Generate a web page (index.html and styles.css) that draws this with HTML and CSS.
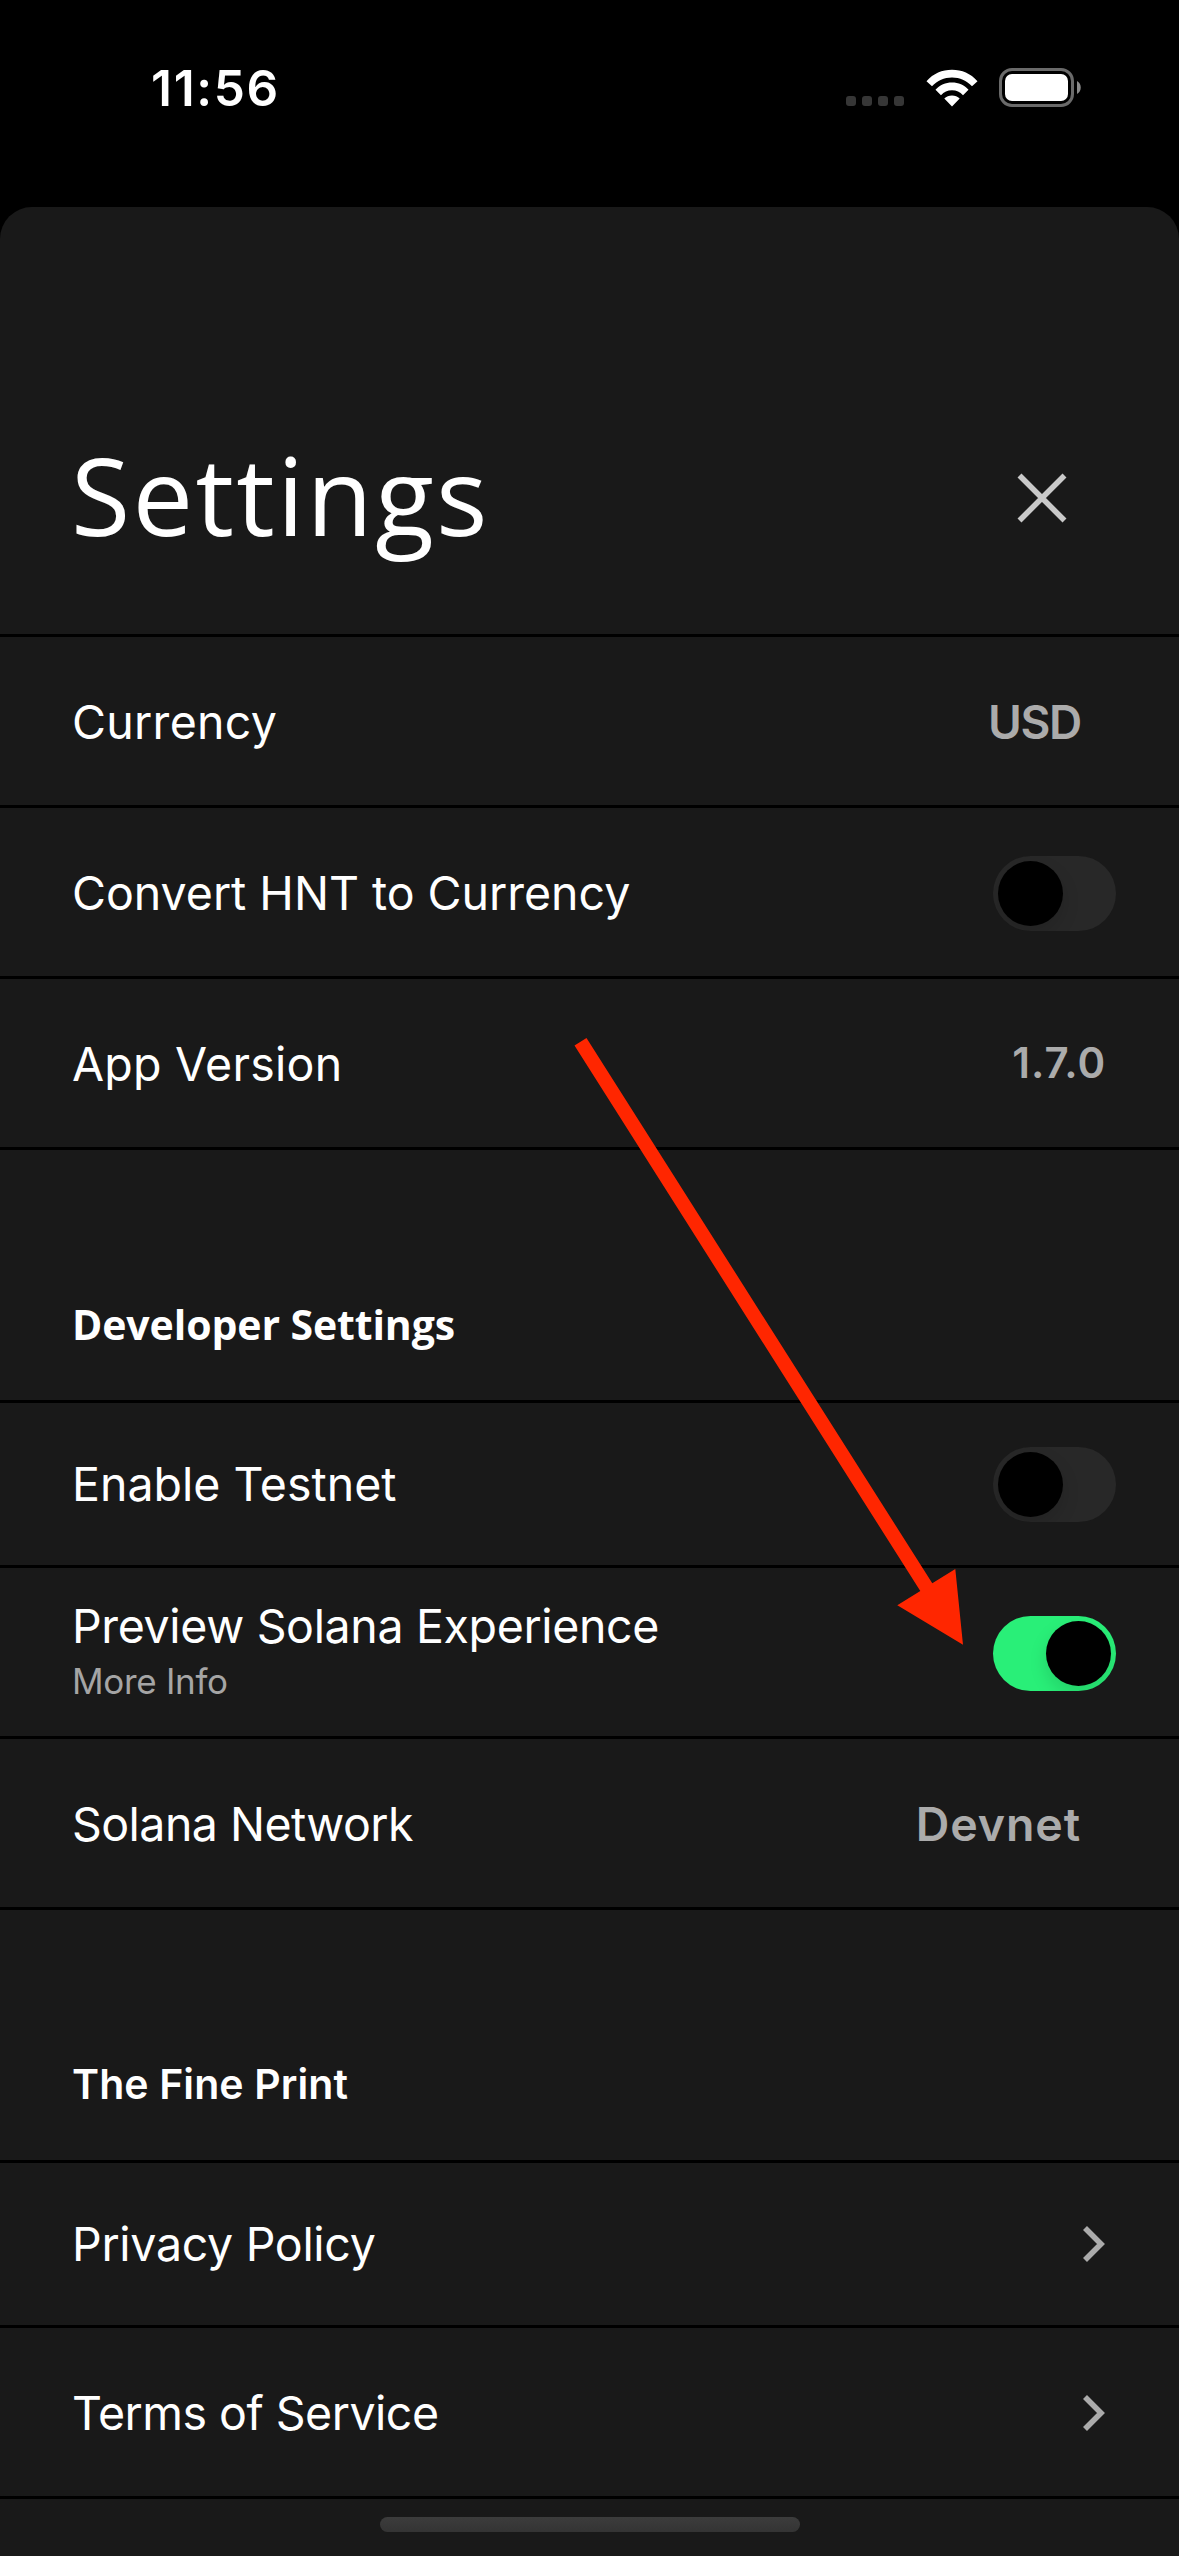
FILE: index.html
```
<!DOCTYPE html>
<html lang="en">
<head>
<meta charset="utf-8">
<title>Settings</title>
<link rel="stylesheet" href="styles.css">
</head>
<body>
<div class="screen">
  <header class="status">
    <span class="time">11:56</span>
    <div class="status-icons">
      <span class="dots"><i></i><i></i><i></i><i></i></span>
      <svg class="wifi" width="52" height="38" viewBox="0 0 52 38">
        <path fill="#fff" d="M.5 12.2C7.500 4.500 16 .8 26 .8s18.500 3.700 25.500 11.400L46 17.300C40.500 11.500 34 8.500 26 8.500S11.500 11.500 6 17.300zM9.500 20.800C14 16 19.500 13.600 26 13.600s12 2.400 16.500 7.200L37 26.200C34 23 30.500 21.300 26 21.300S18 23 15 26.200zM18.300 29.500C20.400 27.500 23 26.500 26 26.500s5.600 1 7.700 3L26 37.500z"/>
      </svg>
      <svg class="battery" width="83" height="39" viewBox="0 0 83 39">
        <rect x="1.500" y="1.500" width="72" height="36" rx="11.500" fill="none" stroke="#6a6a6a" stroke-width="3"/>
        <rect x="6" y="6" width="63" height="27" rx="7" fill="#fff"/>
        <path d="M78 13c5 2.500 5 10.500 0 13z" fill="#8a8a8a"/>
      </svg>
    </div>
  </header>

  <main class="sheet">
    <div class="sheet-head">
      <h1>Settings</h1>
      <svg class="close" width="50" height="50" viewBox="0 0 50 50"><path d="M2.500 2.500 47.500 47.500M47.500 2.500 2.500 47.500" stroke="#c9c9c9" stroke-width="5.600"/></svg>
    </div>

    <section class="group">
      <div class="row"><span class="label currency">Currency</span><span class="value select usd">USD</span></div>
      <div class="row"><span class="label convert">Convert HNT to Currency</span><span class="toggle"></span></div>
      <div class="row"><span class="label app">App Version</span><span class="value version">1.7.0</span></div>
    </section>

    <h2 class="dev">Developer Settings</h2>
    <section class="group">
      <div class="row short"><span class="label">Enable Testnet</span><span class="toggle"></span></div>
      <div class="row double">
        <div class="stack"><span class="label preview">Preview Solana Experience</span><span class="hint">More Info</span></div>
        <span class="toggle on"></span>
      </div>
      <div class="row"><span class="label solana">Solana Network</span><span class="value select devnet">Devnet</span></div>
    </section>

    <h2 class="fine">The Fine Print</h2>
    <section class="group">
      <div class="row short"><span class="label privacy">Privacy Policy</span>
        <svg class="chevron" width="24" height="38" viewBox="0 0 24 38"><path d="M3 3 19 19 3 35" fill="none" stroke="#ababab" stroke-width="5.600"/></svg></div>
      <div class="row"><span class="label terms">Terms of Service</span>
        <svg class="chevron" width="24" height="38" viewBox="0 0 24 38"><path d="M3 3 19 19 3 35" fill="none" stroke="#ababab" stroke-width="5.600"/></svg></div>
    </section>
  </main>

  <svg class="arrow" width="400" height="620" viewBox="570 1030 400 620">
    <path fill="#ff2600" d="M586.500 1038 932.300 1583.300 955.300 1569 963 1644.700 897.300 1605.300 920.300 1591 574.500 1045.500z"/>
  </svg>
  <div class="home"></div>
</div>
</body>
</html>
```
FILE: styles.css
```
* { box-sizing: border-box; }
body { margin: 0; background: #000; }

.screen {
  position: relative;
  display: flex;
  flex-direction: column;
  width: 1179px;
  height: 2556px;
  overflow: hidden;
  background: #000;
  color: #fff;
  font-family: "Inter", "Liberation Sans", sans-serif;
}

/* Status bar */
.status {
  display: flex;
  justify-content: space-between;
  height: 207px;
  padding: 58px 97px 0 151px;
}
.time { font-size: 49.5px; font-weight: 600; line-height: 60px; letter-spacing: 1.7px; }
.status-icons { display: flex; align-items: flex-end; height: 49px; }
.dots { display: flex; gap: 6px; margin: 0 22px 1px 0; }
.dots i { width: 10px; height: 10px; border-radius: 3px; background: #363636; }
.wifi { display: block; margin-right: 21px; }
.battery { display: block; }

/* Sheet */
.sheet {
  flex: 1;
  border-radius: 32px 32px 0 0;
  background: #191919;
}
.sheet-head {
  display: flex;
  justify-content: space-between;
  align-items: flex-end;
  height: 427px;
  padding: 0 112px 79px 71px;
}
h1, h2 { margin: 0; }
h1 {
  font: 400 108px/120px "Open Sans", sans-serif;
  letter-spacing: 2.3px;
}
.close { margin-bottom: 32px; }

.group { border-top: 3px solid #000; }
.row {
  display: flex;
  justify-content: space-between;
  align-items: center;
  height: 171px;
  padding: 2px 63px 0 72px;
  border-bottom: 3px solid #000;
}
.row.short { height: 165px; padding-top: 0; padding-bottom: 0; }
.row.double { padding-top: 0; padding-bottom: 2px; }

.label { font-size: 46.5px; font-weight: 400; line-height: 60px; white-space: nowrap; }
.stack { display: flex; flex-direction: column; }
.hint { font-size: 35px; line-height: 50px; letter-spacing: -.3px; color: #a5a5a5; }
.value { font-size: 46.5px; font-weight: 600; line-height: 60px; color: #ababab; }
.select { margin-right: 35px; }
.version { margin: 0 10px 2px 0; font-size: 42px; letter-spacing: .9px; }

/* Tracking per text */
.currency { letter-spacing: .3px; }
.convert { letter-spacing: -.02px; }
.app { letter-spacing: .25px; }
.preview { letter-spacing: -.35px; }
.solana { letter-spacing: -.55px; }
.privacy { letter-spacing: -.3px; }
.terms { letter-spacing: -.5px; }
.usd { font-size: 46px; letter-spacing: -1.3px; }
.devnet { letter-spacing: .9px; }

h2 {
  display: flex;
  align-items: flex-end;
  height: 250px;
  padding-left: 72px;
  line-height: 50px;
  font-weight: 600;
  font-size: 41px;
}
h2.dev { padding-bottom: 51px; font-family: "Open Sans", sans-serif; font-weight: 700; letter-spacing: -.1px; }
h2.fine { padding-bottom: 51px; letter-spacing: .1px; }

/* Switch */
.toggle {
  display: flex;
  width: 123px;
  height: 75px;
  padding: 5px;
  border-radius: 38px;
  background: #282828;
  overflow: hidden;
}
.toggle::before {
  content: "";
  width: 65px;
  height: 65px;
  border-radius: 50%;
  background: #000;
  box-shadow: 0 8px 18px rgba(0, 0, 0, .13);
}
.toggle.on { justify-content: flex-end; margin-top: 4px; background: #29ef78; }

.chevron { margin-right: 10px; }

/* Overlays */
.arrow { position: absolute; left: 570px; top: 1030px; }
.home {
  position: absolute;
  left: 380px;
  bottom: 24px;
  width: 420px;
  height: 15px;
  border-radius: 8px;
  background: linear-gradient(#3c3c3c, #343434);
}
```
